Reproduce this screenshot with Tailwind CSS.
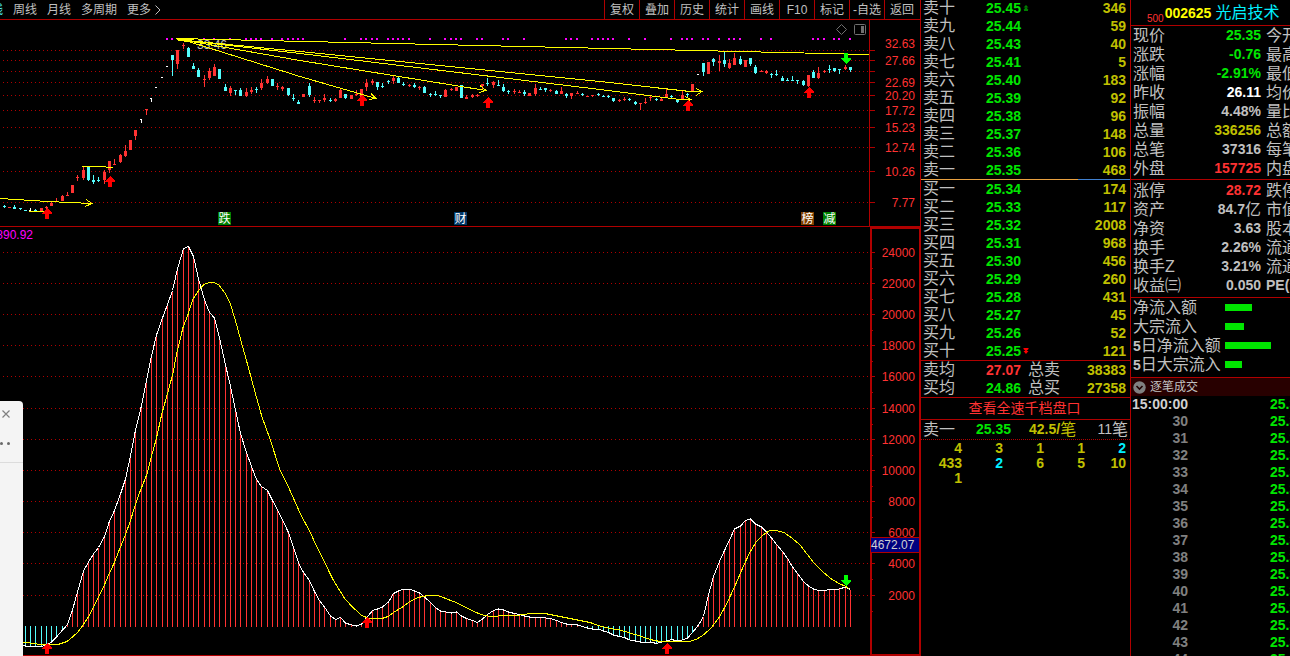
<!DOCTYPE html>
<html lang="zh-CN">
<head>
<meta charset="utf-8">
<title>002625 光启技术</title>
<script src="https://cdn.jsdelivr.net/npm/@tailwindcss/browser@4"></script>
</head>
<body class="flex h-screen overflow-hidden bg-black font-['Liberation_Sans','Noto_Sans_CJK_SC',sans-serif] text-[#c0c0c0]">

<main class="relative flex min-w-0 flex-1 flex-col overflow-hidden">
  <nav class="flex h-5 shrink-0 justify-between border-b border-[#b00000] text-xs leading-[18px] whitespace-nowrap">
    <div class="-ml-[21px] flex gap-[10px]">
      <button class="text-[#54fcfc]">日线</button>
      <button>周线</button>
      <button>月线</button>
      <button>多周期</button>
      <button class="flex items-center gap-[3px]">更多
        <svg class="h-3 w-2" viewBox="0 0 8 12" fill="none" stroke="#c0c0c0"><path d="M1.5 1.5 L6 6 L1.5 10.5"/></svg>
      </button>
    </div>
    <div class="flex pr-px *:w-[35px] *:border-l *:border-[#b00000]">
      <button>复权</button><button>叠加</button><button>历史</button><button>统计</button><button>画线</button><button>F10</button><button>标记</button><button>-自选</button><button>返回</button>
    </div>
  </nav>

  <svg id="price" class="block h-auto w-full shrink-0" viewBox="0 20 920 206" font-size="12" shape-rendering="crispEdges" role="img" aria-label="K线图"></svg>
  <div class="h-px w-full shrink-0 bg-[#b00000]"></div>
  <svg id="flow" class="block h-auto w-full shrink-0" viewBox="0 227 920 429" font-size="12" shape-rendering="crispEdges" role="img" aria-label="指标图"></svg>

  <aside class="absolute top-[401px] bottom-0 left-0 w-[23px] rounded-tr-sm bg-[#f4f4f4]">
    <button class="block h-[27px] w-3" aria-label="关闭">
      <svg class="block h-[27px] w-3" viewBox="0 0 12 27" stroke="#808080" fill="none"><path d="M2.500 9.500 L9.500 16.500 M9.500 9.500 L2.500 16.500" stroke-width="1.2"/></svg>
    </button>
    <svg class="block h-[35px] w-[23px]" viewBox="0 0 23 35" fill="#6a6a6a"><circle cx="1.5" cy="15.5" r="1.5"/><circle cx="8.5" cy="15.5" r="1.5"/><path d="M0 34.5H23" stroke="#dcdcdc"/></svg>
  </aside>
</main>

<section class="flex w-[210px] shrink-0 flex-col overflow-hidden border-l border-[#b00000] text-base leading-[18px] whitespace-nowrap">
  <table class="-mt-px w-full table-fixed"><colgroup><col class="w-[50px]"><col class="w-[50px]"><col class="w-[10px]"><col></colgroup><tbody id="asks"></tbody></table>
  <div class="flex h-px shrink-0 bg-[#4080d0]"><div class="w-3/4 bg-[#e8a040]"></div></div>
  <table class="w-full table-fixed border-b border-[#b00000]"><colgroup><col class="w-[50px]"><col class="w-[50px]"><col class="w-[10px]"><col></colgroup><tbody id="bids"></tbody></table>
  <table class="w-full table-fixed border-b border-[#b00000]">
    <colgroup><col class="w-[50px]"><col class="w-[50px]"><col class="w-[50px]"><col></colgroup>
    <tbody>
      <tr class="h-[18px]"><th class="p-0 pl-[2px] text-left font-normal">卖均</th><td class="p-0 text-right text-sm leading-[18px] font-bold text-[#ff3232]">27.07</td><th class="p-0 pl-[7px] text-left font-normal">总卖</th><td class="p-0 pr-1 text-right text-sm leading-[18px] font-bold text-[#c0c000]">38383</td></tr>
      <tr class="h-[18px]"><th class="p-0 pl-[2px] text-left font-normal">买均</th><td class="p-0 text-right text-sm leading-[18px] font-bold text-[#00e600]">24.86</td><th class="p-0 pl-[7px] text-left font-normal">总买</th><td class="p-0 pr-1 text-right text-sm leading-[18px] font-bold text-[#c0c000]">27358</td></tr>
    </tbody>
  </table>
  <a href="#" class="block h-[22px] border-b border-[#b00000] pr-[2px] text-center text-sm leading-[21px] text-[#ff3232]">查看全速千档盘口</a>
  <div class="flex h-5 border-b border-dotted border-[#b00000] pr-[2px] pl-[2px] leading-[19px]">
    <span class="w-[53px]">卖一</span>
    <span class="w-[53px] text-sm leading-[19px] font-bold text-[#00e600]">25.35</span>
    <span class="flex text-[#c0c000]"><b class="text-sm leading-[19px]">42.5/</b>笔</span>
    <span class="ml-auto flex"><span class="text-sm leading-[19px]">11</span>笔</span>
  </div>
  <div class="mt-px grid grid-cols-5 pr-1 text-right text-sm leading-[15px] font-bold text-[#c0c000]">
    <span>4</span><span>3</span><span>1</span><span>1</span><span class="text-[#00f0ff]">2</span>
    <span>433</span><span class="text-[#00f0ff]">2</span><span>6</span><span>5</span><span>10</span>
    <span>1</span>
  </div>
</section>

<section class="flex w-[160px] shrink-0 flex-col overflow-hidden border-l border-[#b00000] text-base leading-[19px] whitespace-nowrap">
  <h1 class="flex h-[26px] shrink-0 items-center gap-px border-b border-[#b00000] pl-4 leading-[25px]">
    <small class="pt-3 text-[10px] leading-3 text-[#ff3232]">500</small>
    <b class="text-sm text-[#ffff00]">002625</b>
    <span class="pl-[3px] text-[#00f0ff]">光启技术</span>
  </h1>
  <div class="shrink-0 border-b border-[#b00000] pb-px">
    <table class="w-[190px] table-fixed"><colgroup><col class="w-[50px]"><col class="w-[81px]"><col></colgroup><tbody id="quote"></tbody></table>
  </div>
  <div class="shrink-0 border-b border-[#b00000] pt-px pb-[2px]">
    <table class="w-[190px] table-fixed"><colgroup><col class="w-[50px]"><col class="w-[81px]"><col></colgroup><tbody id="stats"></tbody></table>
  </div>
  <ul id="inflow" class="shrink-0 border-b border-[#b00000] pb-[3px]"></ul>
  <h2 class="flex h-[18px] shrink-0 items-center gap-1 bg-[#280000] pl-[2px] text-xs">
    <svg class="h-[13px] w-[13px]" viewBox="0 0 13 13"><circle cx="6.5" cy="6.5" r="6.2" fill="#808080"/><path d="M3.5 5 L6.5 8 L9.5 5" fill="none" stroke="#200000" stroke-width="1.6"/></svg>
    逐笔成交
  </h2>
  <table class="w-[190px] shrink-0 table-fixed text-sm leading-[17px] font-bold"><colgroup><col class="w-[57px]"><col></colgroup><tbody id="ticks"></tbody></table>
</section>

<script>
const $ = id => document.getElementById(id);
const RED = '#ff3232', CYAN = '#54fcfc', LINE = '#b00000', YEL = '#ffff00';
const X = i => Math.round(3.9 + 5.255 * i);
const rect = (x, y, w, h, f) => `<rect x="${x}" y="${y}" width="${w}" height="${h}" fill="${f}"/>`;
const line = (pts, c) => `<polyline points="${pts}" fill="none" stroke="${c}"/>`;
const grid = y => `<path d="M3 ${y + .5}H868" stroke="#b00000" stroke-dasharray="1 3"/>`;
const up = (x, y) => `<path d="M${x} ${y}l5 5v1h-3v5h-4v-5h-3v-1z" fill="#ff0000"/>`;
const down = (x, y) => `<path d="M${x - 2} ${y}h4v5h3v1l-5 5l-5 -5v-1h3z" fill="#00ff00"/>`;
const label = (t, y) => `<text x="915" y="${y + 5}" text-anchor="end" fill="${RED}">${t}</text>`;

// Candles: colour, high, low, body top, body bottom
const candles = `c205,208,206,207 r207,208,207,208 c205,209,207,209 c208,210,208,209 c210,211,210,211 w208,211,210,211 c209,211,210,211 r208,211,208,211 r206,209,207,208 r202,206,203,206 r198,202,201,202 r195,201,196,201 r192,195,195,196 r185,193,185,193 r175,181,177,178 r167,180,170,178 c166,181,167,180 c175,184,180,182 c177,182,180,181 r170,184,172,180
r161,173,161,170 r159,165,164,165 r154,163,155,162 r145,157,151,156 r140,150,140,150 r130,140,130,136 w119,123,119,120 r109,115,109,110 w98,102,98,99 w87,88,87,88 w77,78,77,78 w66,67,66,67 c55,76,55,60 r50,69,50,64 r43,49,45,46 c47,57,48,57 c63,69,66,69 c68,77,70,77 r75,87,79,80 r68,80,71,78
r64,76,67,76 c69,79,69,79 c84,91,87,91 r86,96,88,93 c90,95,90,91 c88,96,90,96 r88,97,92,96 r87,94,90,92 c87,93,89,90 r79,90,83,88 r76,84,79,83 c79,86,79,86 r83,90,86,87 r86,91,87,89 c88,96,88,95 c94,101,98,99 c100,104,102,104 r94,97,94,97 c83,97,86,95 r97,103,100,101
r100,103,100,101 r94,102,98,100 c98,102,100,101 r98,102,99,101 r88,98,90,98 c94,99,94,98 r95,99,95,99 r90,96,94,95 r89,99,89,98 r79,91,83,87 r79,85,81,83 c82,90,82,87 c83,88,86,87 c80,84,81,82 r76,84,78,81 c76,83,78,83 c82,86,84,85 r84,87,85,86 c83,88,85,87 r86,90,87,88
c86,93,87,93 c93,97,94,95 c91,96,94,95 c95,98,95,96 r89,97,90,97 r88,91,89,90 r87,91,87,91 c85,98,85,98 r95,99,97,99 r94,98,95,97 r94,97,95,96 r84,90,84,86 c78,86,83,84 r81,88,82,85 c80,86,85,86 c84,92,87,91 c90,94,91,92 r89,94,91,92 r90,93,92,93 c90,96,92,94
r93,96,93,96 r84,96,88,94 c87,90,89,90 c88,92,88,90 r89,92,90,91 c90,94,91,94 r87,94,91,94 c93,98,94,96 r93,99,93,96 r91,94,93,94 c93,96,94,95 r96,97,96,97 r95,97,95,96 c93,96,94,95 c95,97,96,97 c95,98,96,97 c98,102,98,101 r99,102,100,101 r97,101,99,100 c98,101,99,100
c101,105,102,104 r103,110,103,104 r98,104,102,103 r96,101,97,98 c98,101,99,100 r98,101,99,101 r89,97,94,97 c95,98,96,97 c99,103,100,102 r91,99,95,99 c93,98,94,95 r84,92,84,91 w74,75,74,75 c63,76,63,72 r62,74,62,74 c58,66,59,62 r55,71,61,63 c52,67,60,64 r59,69,63,68 r53,65,58,65
c56,65,59,64 r60,67,60,67 c58,66,58,64 c65,74,67,73 r70,72,71,72 r70,74,71,73 c73,78,74,75 c70,76,74,75 c76,81,78,81 c78,81,80,81 c76,81,80,81 c80,84,80,81 c80,86,81,85 r75,87,75,86 c70,78,72,78 r67,79,73,78 r70,73,71,72 c65,73,69,70 c68,72,68,71 c69,74,69,70 r65,70,67,69 c67,72,67,70`.split(/\s+/);
const marks = [31,32,35,38,40,43,46,47,48,49,51,53,54,55,56,57,65,68,69,70,71,73,74,75,76,77,81,84,85,86,87,90,91,95,96,99,107,108,109,112,113,114,115,116,119,122,127,129,130,131,133,134,136,138,139,140,144,146,154,155,156,158,159,161];

let s = [50,60,71,82,95,110,127,147,171,202].map(y => grid(y) + rect(870, y, 5, 1, LINE)).join('');
s += rect(869, 20, 1, 206, LINE);
s += marks.map(i => rect(X(i) - 1, 38, 2, 2, '#ff00ff')).join('');
s += candles.map((c, i) => {
  const f = { c: CYAN, r: RED, w: '#ffffff' }[c[0]], [h, l, t, b] = c.slice(1).split(',').map(Number), x = X(i);
  return (l - h > 1 ? rect(x, h, 1, l - h, f) : '') + rect(x - 1, t, c[0] === 'w' ? 2 : 3, b - t, f);
}).join('');
s += '<text x="197" y="49" fill="#c0c0c0">33.46</text>';
s += ['176,38.5 869,54.5','177,39.5 300,51.5 600,81.5 690,91.5 702,91.5','177,39.5 300,53.5 600,89.5 680,99.5 691,99.5','180,39.5 300,60.5 486,90.5','182,39.5 300,76.5 376,98.5','177,39.5 194,39.5','178,40.5 190,41.5','0,198.5 48,201.5 92,203.5','82,166.5 98,166.5 113,167.5','29,211.5 45,211.5',
  '696,88.5 702,91.5 696,95.5','685,96.5 691,99.5 685,103.5','480,85.5 486,90.5 479,92.5','371,93.5 376,98.5 369,99.5','86,199.5 92,203.5 85,206.5'].map(p => line(p, YEL)).join('');
s += up(47,208) + up(110,176) + up(362,95) + up(488,97) + up(688,100) + up(809,87) + down(846,53);
s += [[218,'跌','#008000'],[454,'财','#003868'],[801,'榜','#804000'],[823,'减','#008000']].map(([x, t, f]) => rect(x, 212, 13, 13, f) + `<text x="${x + .5}" y="223" fill="#fff">${t}</text>`).join('');
s += '<g fill="none" stroke="#707070" shape-rendering="auto"><path d="M841.5 24.5l5 5l-5 5l-5-5z"/><rect x="854.5" y="24.5" width="11" height="10" rx="1"/><rect x="861" y="26" width="3" height="7" fill="#707070" stroke="none"/></g>';
s += [['32.63',43],['27.66',60],['22.69',82],['20.20',95],['17.72',110],['15.23',127],['12.74',147],['10.26',171],['7.77',202]].map(([t, y]) => label(t, y)).join('');
$('price').innerHTML = s;

// Indicator values at each bar, starting at the fifth bar
const white = [646,646,647,646.5,645,642,637,630,624.7,610,592,571,562,554,547.5,536.5,521,510.5,494,479,456,430,405.5,381,356,335,318,304.5,290.5,269,248.5,246.5,256.5,279,300,312.5,318,338,365,386.5,410,433.5,452.5,466.5,479.5,486.5,490.5,500.5,510,520,532.5,547,563,572.5,580.5,591.5,600.5,
607,616,619.5,617.5,623,625,626,624,618,610.5,609,607,602,593.5,591,589,589,591,593,597,602.5,607.5,611,612,613,612,616,618.5,620.5,622.5,619,614.5,610.5,609,610,612,613.5,614.5,616,617,617,617,618,618.5,620.5,622.5,624,624,625,626.5,628,629,629,631,632.5,635,636.5,
637.5,640,641,642,643,642,643.5,642,641,639.5,641,640,638,632.5,625,616.5,595,576.5,561.5,550.5,540,529,526,520.5,519,524,527,532,538,544.5,551.5,558.5,567,573.5,581.5,586,589,590.5,590.5,589.5,589.5,589,587,589.5];
const yellow = '23,642.5 30,643 40,644.5 58,644.5 67,641.5 73,636.5 78,632 83,625 89,616 98,598 104,586 109,574 114,563.5 119,550.5 125,536 130,522 135,506 140,491.5 147,474 151,458 156,440 162,413 167,395.5 173,373 177,352 183,327.5 188,314.5 193,299 199,290 204,284.5 209,282.5 214,282.5 219,285 225,293 230,303 235,319 241,341 248,366 255,392 262,417 270,439 280,470 288,486 294,499.5 300,513 305,522.5 310,532 316,545 320,553 333,579.5 340,591 345,599 352,606.5 361,615 369,618.5 382,618.5 388,616.5 395,611.5 402,607.5 410,601.5 418,597.5 428,595.5 438,595.5 447,599 456,602.5 466,607.5 475,612 484,615.5 492,616.5 504,615.5 520,615 535,613 545,613.5 560,616.5 575,619.5 590,622.5 600,626 610,628.5 620,630 630,633 640,636 650,639.5 660,641.5 690,641.5 697,639 704,634.5 712,627 720,616 727,603 735,586 742,569.5 749,554 756,542 763,535 769,531 776,530.5 784,532.5 792,538 800,545 807,554 814,563 822,571 830,578 838,583 846,586.5 849,589';
const levels = [252,283,314,345,376,408,439,470,501,532,563,595];
s = levels.map(y => grid(y) + rect(872, y, 3, 1, LINE) + rect(872, y + 16, 1, 1, LINE)).join('');
s += white.map((y, k) => y < 627 ? rect(X(k + 4), y, 1, 627 - y, RED) : rect(X(k + 4), 626, 1, y - 626, CYAN)).join('');
s += line('22,645.5 ' + white.map((y, k) => `${X(k + 4) + .5},${y}`).join(' '), '#ffffff') + line(yellow, YEL);
s += up(47,643) + up(367,617) + up(667,643) + down(846,575);
s += rect(0, 655, 870, 1, LINE) + `<rect x="871" y="228" width="49" height="427" fill="none" stroke="${LINE}" stroke-width="2"/>`;
s += levels.map((y, k) => label(24000 - k * 2000, y)).join('');
s += rect(870, 537, 49, 16, LINE) + rect(871, 538, 48, 14, '#000080') + '<text x="871" y="549" fill="#d0d0d0">4672.07</text>';
s += '<text x="33" y="239" text-anchor="end" fill="#ff00ff">890.92</text>';
$('flow').innerHTML = s;

// Order book
const arrows = { up: '<svg class="block h-[6px] w-[6px]" viewBox="0 0 6 6" fill="#008000"><path d="M3 0L5.5 2.5H.5zM3 2L5.5 5H.5zM1 5h4v1H1z"/></svg>', down: '<svg class="block h-[6px] w-[6px]" viewBox="0 0 6 6" fill="#ff0000"><path d="M.5 0h5v1h-5zM.5 1h5L3 3.500zM.5 3h5L3 6z"/></svg>' };
const book = (side, rows) => rows.map(([n, p, v, a]) => `<tr class="h-[18px]"><th class="p-0 pl-[2px] text-left font-normal">${side}${n}</th><td class="p-0 text-right text-sm leading-[18px] font-bold text-[#00e600]">${p}</td><td class="p-0 pl-[2px]">${a ? arrows[a] : ''}</td><td class="p-0 pr-1 text-right text-sm leading-[18px] font-bold text-[#c0c000]">${v}</td></tr>`).join('');
$('asks').innerHTML = book('卖', [['十','25.45',346,'up'],['九','25.44',59],['八','25.43',40],['七','25.41',5],['六','25.40',183],['五','25.39',92],['四','25.38',96],['三','25.37',148],['二','25.36',106],['一','25.35',468]]);
$('bids').innerHTML = book('买', [['一','25.34',174],['二','25.33',117],['三','25.32',2008],['四','25.31',968],['五','25.30',456],['六','25.29',260],['七','25.28',431],['八','25.27',45],['九','25.26',52],['十','25.25',121,'down']]);

// Quote details
const tone = { g: 'text-[#00e600]', w: 'text-white', s: 'text-[#c0c0c0]', y: 'text-[#c0c000]', r: 'text-[#ff3232]' };
const info = rows => rows.map(([a, v, c, b]) => `<tr class="h-[19px]"><th class="p-0 pl-[2px] text-left font-normal">${a}</th><td class="p-0 pr-px text-right text-sm leading-[19px] font-bold ${tone[c]}">${v}</td><th class="p-0 pl-1 text-left font-normal">${b}</th></tr>`).join('');
$('quote').innerHTML = info([['现价','25.35','g','今开'],['涨跌','-0.76','g','最高'],['涨幅','-2.91%','g','最低'],['昨收','26.11','w','均价'],['振幅','4.48%','s','量比'],['总量','336256','y','总额'],['总笔','37316','s','每笔'],['外盘','157725','r','内盘']]);
$('stats').innerHTML = info([['涨停','28.72','r','跌停'],['资产','<span class="flex justify-end">84.7<span class="text-base leading-[19px] font-normal">亿</span></span>','s','市值'],['净资','3.63','s','股本'],['换手','2.26%','s','流通'],['换手Z','3.21%','s','流通'],['收益㈢','0.050','s','<span class="flex"><b class="text-sm leading-[19px]">PE(</b>动)</span>']]);
$('inflow').innerHTML = [['净流入额',27],['大宗流入',19],['<b class="text-sm leading-[19px]">5</b>日净流入额',46],['<b class="text-sm leading-[19px]">5</b>日大宗流入',17]].map(([t, w]) => `<li class="flex h-[19px] items-center pl-[2px]"><span class="w-[92px] shrink-0">${t}</span><span class="h-[7px] bg-[#00e600]" style="width:${w}px"></span></li>`).join('');
$('ticks').innerHTML = ['15:00:00',30,31,32,33,34,35,36,37,38,39,40,41,42,43,44].map((t, k) => `<tr class="h-[17px]"><td class="p-0 text-right ${k ? 'text-[#808080]' : 'text-[#d0d0d0]'}">${t}</td><td class="p-0 pl-[82px] text-[#00e600]">25.35</td></tr>`).join('');
</script>
</body>
</html>
